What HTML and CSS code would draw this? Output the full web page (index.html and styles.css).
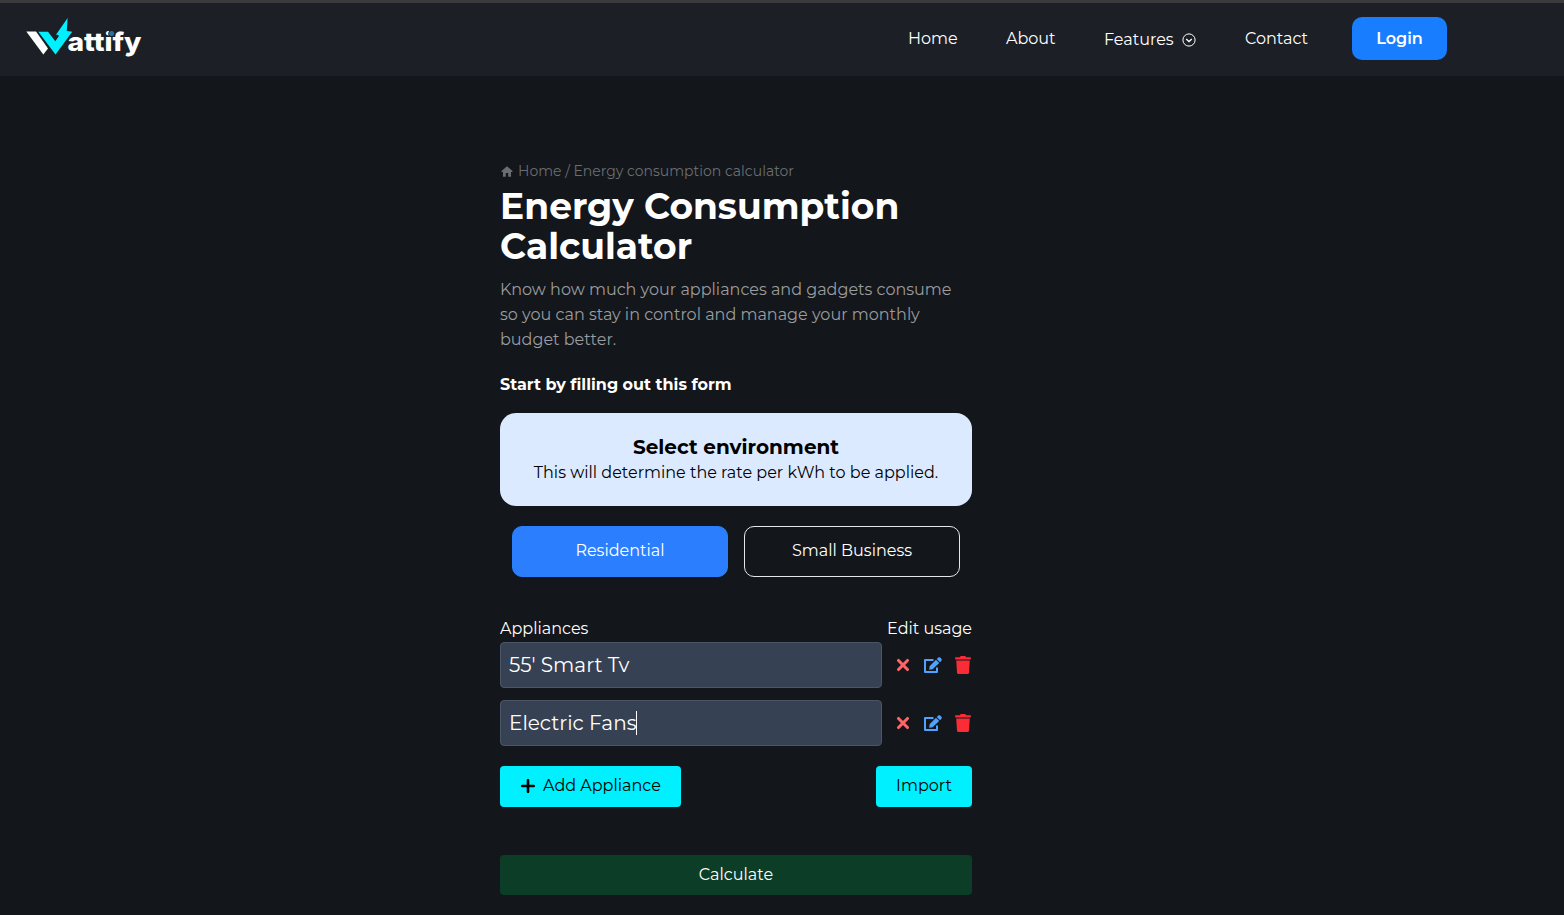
FILE: index.html
```html
<!DOCTYPE html>
<html lang="en">
<head>
<meta charset="utf-8">
<title>Wattify - Energy Consumption Calculator</title>
<link rel="stylesheet" href="styles.css">
</head>
<body>
<svg class="sprite" aria-hidden="true">
  <symbol id="x" viewBox="0 0 14 14"><path d="M2.500 2.500l9 9M11.500 2.500l-9 9" fill="none" stroke="currentColor" stroke-width="3.100" stroke-linecap="round"/></symbol>
  <symbol id="edit" viewBox="0 0 18 16"><path fill="none" stroke="currentColor" stroke-width="2" stroke-linejoin="round" d="M9.500 3H1v12h12v-4.500"/><path fill="currentColor" d="M12 2.800L15.200 6 8.600 12.300 5.200 12.800 5.600 9.200zM12.800 2L14.200.6Q15.200-.2 16.200.6L17.400 1.800Q18.200 2.800 17.400 3.700L16 5.200z"/></symbol>
  <symbol id="trash" viewBox="0 0 448 512"><path fill="currentColor" d="M432 32H312l-9.400-18.700A24 24 0 0 0 281.100 0H166.800a23.720 23.720 0 0 0-21.400 13.300L136 32H16A16 16 0 0 0 0 48v32a16 16 0 0 0 16 16h416a16 16 0 0 0 16-16V48a16 16 0 0 0-16-16zM53.200 467a48 48 0 0 0 47.900 45h245.800a48 48 0 0 0 47.900-45L416 128H32z"/></symbol>
</svg>
<header class="header">
  <svg class="logo" viewBox="0 0 120 44" role="img" aria-label="Wattify">
    <path fill="#fff" d="M.3 14.500H10L22 31.500 17.300 37.500z"/>
    <path fill="#00f0ff" d="M12.300 14.700H22L29.300 24.200 33 19 31.800 17.800H30L41.600 1 40.800 13.900 46.200 14.700 29.500 37.500z"/>
    <text class="logo-text" x="41.500" y="34" textLength="74" lengthAdjust="spacingAndGlyphs">attify</text>
    <circle cx="85.600" cy="16.600" r="3.400" fill="#1c2026"/><circle cx="85.600" cy="16.600" r="2.500" fill="#24749f"/>
  </svg>
  <nav class="nav">
    <a class="home">Home</a>
    <a class="about">About</a>
    <a class="features">Features<svg viewBox="0 0 14 14" width="14" height="14" fill="none" stroke="currentColor"><circle cx="7" cy="7" r="6.100"/><path d="M4.200 6l2.800 2.600L9.800 6" stroke-width="1.300"/></svg></a>
    <a class="contact">Contact</a>
    <a class="login">Login</a>
  </nav>
</header>
<main class="main">
  <div class="crumbs"><svg viewBox="0 0 12 11" width="12" height="11" fill="currentColor"><path d="M6 .2L11.800 5.300 11 6.100H10V10.800H7.200V7H4.800V10.800H2V6.100H1L.2 5.300z"/></svg><span>Home / Energy consumption calculator</span></div>
  <h1 class="title">Energy Consumption Calculator</h1>
  <p class="intro">Know how much your appliances and gadgets consume so you can stay in control and manage your monthly budget better.</p>
  <p class="start">Start by filling out this form</p>
  <section class="notice">
    <h2 class="notice-title">Select environment</h2>
    <p class="notice-text">This will determine the rate per kWh to be applied.</p>
  </section>
  <div class="choices">
    <button class="choice chosen">Residential</button>
    <button class="choice small">Small Business</button>
  </div>
  <div class="labels"><span class="label-left">Appliances</span><span class="label-right">Edit usage</span></div>
  <div class="row">
    <div class="field tv">55' Smart Tv</div>
    <svg class="x"><use href="#x"/></svg><svg class="edit"><use href="#edit"/></svg><svg class="trash"><use href="#trash"/></svg>
  </div>
  <div class="row">
    <div class="field fans">Electric Fans<i class="caret"></i></div>
    <svg class="x"><use href="#x"/></svg><svg class="edit"><use href="#edit"/></svg><svg class="trash"><use href="#trash"/></svg>
  </div>
  <div class="actions">
    <button class="action add"><svg viewBox="0 0 14 14" width="14" height="14"><path d="M7 1.200v11.600M1.200 7h11.600" stroke="currentColor" stroke-width="2.600" stroke-linecap="round"/></svg><span>Add Appliance</span></button>
    <button class="action import">Import</button>
  </div>
  <button class="calculate">Calculate</button>
</main>
</body>
</html>
```
FILE: styles.css
```css
* { box-sizing: border-box; }
body { margin: 0; height: 915px; overflow: hidden; background: #13161b; color: #fff; font: 16px/24px Montserrat, Inter, sans-serif; }
h1, h2, p { margin: 0; }
button { border: 0; padding: 0; font: inherit; color: inherit; white-space: nowrap; }
svg { flex: none; display: block; }
.sprite { display: none; }
.header { height: 76px; border-top: 3px solid #3b3b3d; background: #1c2026; display: flex; justify-content: space-between; padding: 14px 117px 0 26px; }
.logo { width: 120px; height: 44px; }
.logo-text { font: 800 26px Inter, sans-serif; fill: #fff; }
.nav { display: flex; align-items: flex-start; white-space: nowrap; }
.nav a { padding-top: 10px; }
.nav .home { width: 98px; }
.nav .about { width: 98px; }
.nav .features { width: 141px; display: flex; align-items: center; justify-content: space-between; padding: 11px 49px 0 0; }
.nav .contact { width: 107px; }
.nav .login { width: 95px; height: 43px; border-radius: 10px; background: #197dff; font-weight: 600; text-align: center; }
.main { width: 472px; margin: 85px 0 0 500px; }
.crumbs { display: flex; align-items: center; gap: 5px; height: 20px; padding-left: 1px; font-size: 14px; color: #6b6e71; white-space: nowrap; }
.title { margin-top: 5px; font-size: 36px; line-height: 40px; font-weight: 700; }
.intro { margin-top: 11px; line-height: 25px; color: #9a9c9e; }
.start { margin-top: 21px; font-weight: 700; }
.notice { height: 93px; margin-top: 16px; padding-top: 20px; border-radius: 16px; background: #dbeafe; color: #000; text-align: center; white-space: nowrap; }
.notice-title { font-size: 20px; line-height: 28px; font-weight: 700; }
.choices { display: flex; gap: 16px; margin: 20px 12px 0; }
.choice { flex: 1; height: 51px; padding-bottom: 2px; border: 1px solid #e5e7eb; border-radius: 10px; background: none; }
.chosen { background: #2b7fff; border-color: #2b7fff; }
.labels { display: flex; justify-content: space-between; margin-top: 40px; height: 25px; }
.row { display: flex; align-items: center; height: 46px; margin-bottom: 12px; }
.field { width: 382px; height: 46px; padding: 0 8px; border: 1px solid #4a5565; border-radius: 4px; background: #364153; font-size: 20px; line-height: 44px; display: flex; align-items: center; white-space: nowrap; }
.caret { width: 1px; height: 24px; background: #fff; }
.x { width: 14px; height: 14px; margin-left: 14px; color: #ff6467; }
.edit { width: 18px; height: 16px; margin-left: 14px; color: #51a2ff; }
.trash { width: 16px; height: 18px; margin-left: 13px; color: #fb2c36; }
.actions { display: flex; justify-content: space-between; margin-top: 20px; }
.action { height: 41px; padding-bottom: 2px; border-radius: 4px; background: #00f0ff; color: #000; }
.add { width: 181px; display: flex; align-items: center; gap: 8px; padding-left: 21px; }
.import { width: 96px; }
.calculate { width: 472px; height: 40px; margin-top: 48px; border-radius: 4px; background: #0b3d27; display: block; }
```
